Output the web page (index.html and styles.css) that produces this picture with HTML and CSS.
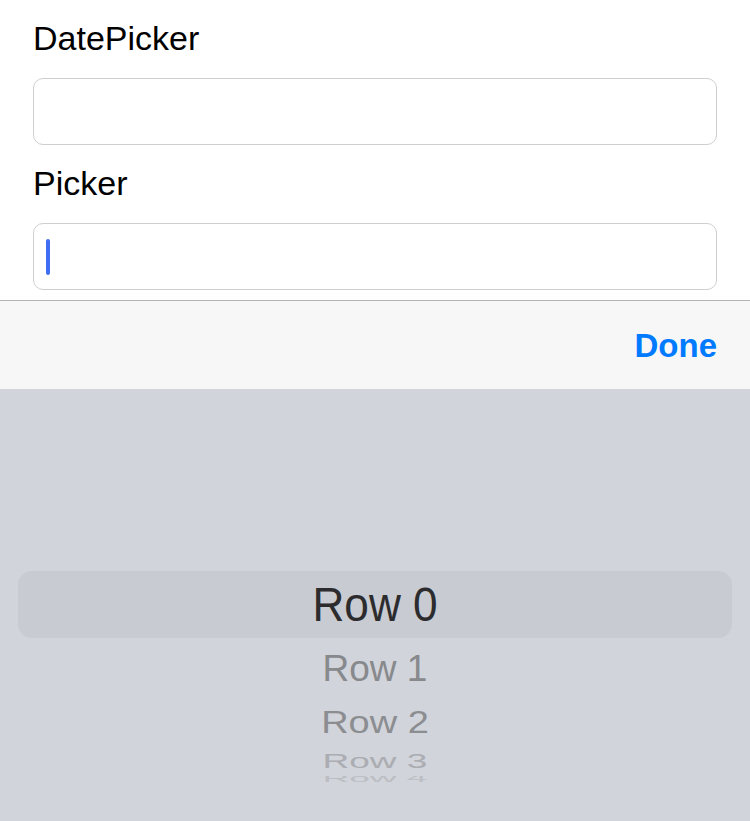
FILE: index.html
```html
<!DOCTYPE html>
<html>
<head>
<meta charset="utf-8">
<link rel="stylesheet" href="styles.css">
</head>
<body>
<div class="screen">
  <div class="form">
    <div class="label">DatePicker</div>
    <div class="field"></div>
    <div class="label">Picker</div>
    <div class="field focused"><span class="caret"></span></div>
  </div>
  <div class="toolbar">
    <span class="done">Done</span>
  </div>
  <div class="wheel">
    <div class="row row0"><span>Row 0</span></div>
    <div class="row row1"><span>Row 1</span></div>
    <div class="row row2"><span>Row 2</span></div>
    <div class="row row3"><span>Row 3</span></div>
    <div class="row row4"><span>Row 4</span></div>
  </div>
</div>
</body>
</html>
```
FILE: styles.css
```css
html, body {
  margin: 0;
  padding: 0;
  background: #ffffff;
}
body {
  font-family: "Liberation Sans", Arial, sans-serif;
  color: #000;
}
.screen {
  width: 750px;
  height: 821px;
  display: flex;
  flex-direction: column;
  overflow: hidden;
}
.form {
  flex-shrink: 0;
  padding: 18px 33px 0 33px;
  display: flex;
  flex-direction: column;
}
.label {
  flex-shrink: 0;
  font-size: 34px;
  line-height: 40px;
  height: 40px;
  margin-bottom: 20px;
}
.field {
  flex-shrink: 0;
  height: 67px;
  box-sizing: border-box;
  border: 1px solid #cfcfcf;
  border-radius: 10px;
  margin-bottom: 18px;
  display: flex;
  align-items: center;
  padding-left: 12px;
}
.field:last-child {
  margin-bottom: 0;
}
.caret {
  width: 4px;
  height: 36px;
  border-radius: 2px;
  background: #3f6ef3;
}
.toolbar {
  flex-shrink: 0;
  border-top: 1px solid #b3b3b3;
  margin-top: 10px;
  height: 89px;
  box-sizing: border-box;
  background: #f7f7f7;
  display: flex;
  align-items: center;
  justify-content: flex-end;
  padding-right: 33px;
}
.done {
  color: #007aff;
  font-weight: bold;
  font-size: 33px;
  line-height: 1;
}
.wheel {
  flex: 1;
  background: #d1d4da;
  padding-top: 182px;
  box-sizing: border-box;
  display: flex;
  flex-direction: column;
}
.row {
  flex-shrink: 0;
  display: flex;
  align-items: center;
  justify-content: center;
  overflow: hidden;
  line-height: 1;
}
.row span {
  display: inline-block;
  white-space: nowrap;
}
.row0 {
  height: 67px;
  margin: 0 18px;
  background: #c8cbd2;
  border-radius: 14px;
}
.row0 span {
  font-size: 48px;
  color: #2c2c2e;
  transform: scaleX(0.92);
}
.row1 {
  height: 61px;
}
.row1 span {
  font-size: 37px;
  color: #88898d;
}
.row2 {
  height: 46px;
}
.row2 span {
  font-size: 38px;
  color: #8c8d91;
  transform: scaleY(0.81);
}
.row3 {
  height: 31px;
}
.row3 span {
  font-size: 37px;
  color: #abadb2;
  transform: scaleY(0.56);
}
.row4 {
  height: 6px;
  align-items: flex-start;
}
.row4 span {
  font-size: 37px;
  color: #bcbec3;
  transform: scaleY(0.3);
  transform-origin: top center;
  margin-top: -3px;
}
```
